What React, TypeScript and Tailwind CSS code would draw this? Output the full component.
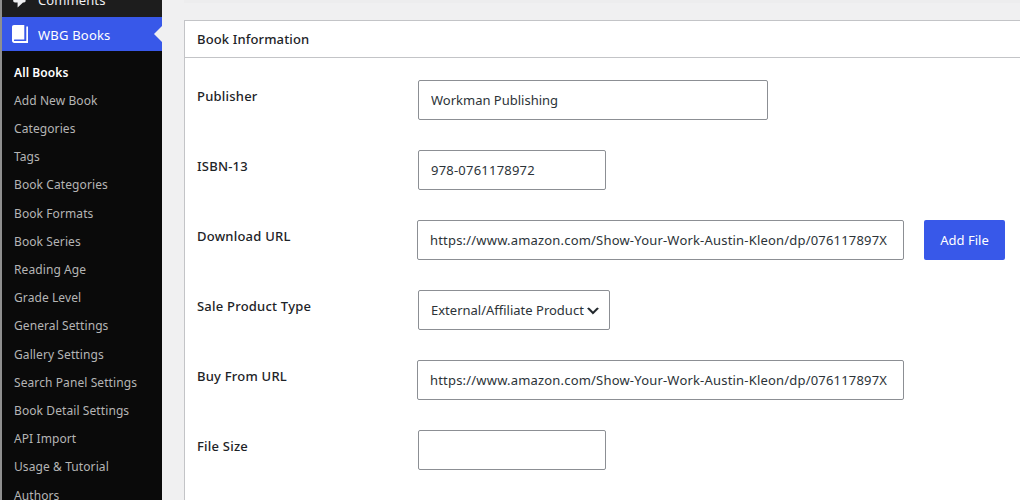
import type { ReactNode } from 'react'

const menuItems = [
  'All Books',
  'Add New Book',
  'Categories',
  'Tags',
  'Book Categories',
  'Book Formats',
  'Book Series',
  'Reading Age',
  'Grade Level',
  'General Settings',
  'Gallery Settings',
  'Search Panel Settings',
  'Book Detail Settings',
  'API Import',
  'Usage & Tutorial',
  'Authors',
]

const AMAZON_URL = 'https://www.amazon.com/Show-Your-Work-Austin-Kleon/dp/076117897X'

function BookIcon() {
  return (
    <svg width="16" height="18" viewBox="0 0 16 18" fill="#fff">
      <path d="M2 0h10.3v14.4H2.6c-.9 0-.9 1.7 0 1.7h11.7V1.5H16V18H2.4C.9 18 0 17 0 15.6V2C0 .8.8 0 2 0z" />
    </svg>
  )
}

function CommentIcon() {
  return (
    <svg width="16" height="16" viewBox="0 0 16 16" fill="#f0f0f1">
      <path d="M3 0h9c1 0 1.6.6 1.6 1.6v7.2c0 1-.6 1.6-1.6 1.6h-1L5.6 15.6V10.4H3c-1 0-1.8-.6-1.8-1.6V1.6C1.2.6 2 0 3 0z" />
    </svg>
  )
}

function Sidebar() {
  return (
    <nav className="h-[500px] w-[160px] shrink-0 overflow-hidden bg-[#0a0a0a]">
      <div className="flex h-[17px] items-end overflow-hidden bg-[#1d1d1d] text-[#f0f0f1]">
        <div className="flex h-[34px] shrink-0 items-center pl-[10px]">
          <CommentIcon />
          <span className="ml-[10px] text-[13px] leading-[20px] tracking-[0.1px]">Comments</span>
        </div>
      </div>
      <div className="relative flex h-[34px] items-center bg-[#3858e9] pl-[10px] text-white">
        <BookIcon />
        <span className="ml-[10px] pt-[2px] text-[13px] leading-[20px] tracking-[0.2px]">WBG Books</span>
        <svg className="absolute top-[9px] right-0" width="8" height="16" viewBox="0 0 8 16" fill="#f0f0f1">
          <path d="M8 0v16L0 8z" />
        </svg>
      </div>
      <ul className="pt-[7.6px]">
        {menuItems.map((item, i) => (
          <li
            key={item}
            className={`flex h-[28.2px] items-center pl-3 text-[12px] tracking-[0.09px] whitespace-nowrap ${
              i === 0 ? 'font-semibold text-white' : 'text-[#b5b5b5]'
            }`}
          >
            {item}
          </li>
        ))}
      </ul>
    </nav>
  )
}

function Row({ label, children }: { label: string; children: ReactNode }) {
  return (
    <div className="flex h-[70px] items-start">
      <label className="w-[220px] shrink-0 pt-[6px] text-[13px] leading-[20px] font-medium tracking-[0.22px] text-[#1d2327]">
        {label}
      </label>
      {children}
    </div>
  )
}

function Field({ className, value }: { className: string; value: string }) {
  return (
    <input
      type="text"
      defaultValue={value}
      className={`h-10 shrink-0 rounded-[2px] border border-[#8c8f94] bg-white px-3 text-[13px] text-[#2c3338] outline-none ${className}`}
    />
  )
}

export default function App() {
  return (
    <div className="flex h-[500px] w-[1020px] overflow-hidden bg-[#f0f0f1] font-['Noto_Sans',sans-serif]">
      <div className="w-[2px] shrink-0 bg-[#8f8f8f]" />
      <Sidebar />
      <main className="ml-[22px] flex flex-1 flex-col overflow-hidden">
        <div className="h-[3px] bg-[#ededee]" />
        <section className="mt-[17px] flex-1 border-t border-l border-[#c3c4c7] bg-white">
          <h2 className="h-[37px] border-b border-[#c3c4c7] pl-3 text-[13px] leading-[37px] font-medium tracking-[0.13px] text-[#1d2327]">
            Book Information
          </h2>
          <div className="pt-[22px] pl-3">
            <Row label="Publisher">
              <Field className="ml-px w-[350px]" value="Workman Publishing" />
            </Row>
            <Row label="ISBN-13">
              <Field className="ml-px w-[188px] tracking-[0.22px]" value="978-0761178972" />
            </Row>
            <Row label="Download URL">
              <Field className="w-[487px] tracking-[0.19px]" value={AMAZON_URL} />
              <button className="ml-5 h-10 w-[81px] rounded-[2px] bg-[#3858e9] text-[13px] leading-[20px] text-white">
                Add File
              </button>
            </Row>
            <Row label="Sale Product Type">
              <button className="ml-px flex h-10 w-[192px] items-center rounded-[2px] border border-[#8c8f94] pl-3 text-[13px] whitespace-nowrap text-[#2c3338]">
                <span className="w-[154px] pt-px text-left">External/Affiliate Product</span>
                <svg className="mt-px shrink-0" width="16" height="16" viewBox="0 0 20 20" fill="#1d2327" stroke="#1d2327" strokeWidth="0.6">
                  <path d="M5 6l5 5 5-5 2 1-7 7-7-7 2-1z" />
                </svg>
              </button>
            </Row>
            <Row label="Buy From URL">
              <Field className="w-[487px] tracking-[0.19px]" value={AMAZON_URL} />
            </Row>
            <Row label="File Size">
              <Field className="ml-px w-[188px]" value="" />
            </Row>
          </div>
        </section>
      </main>
    </div>
  )
}
